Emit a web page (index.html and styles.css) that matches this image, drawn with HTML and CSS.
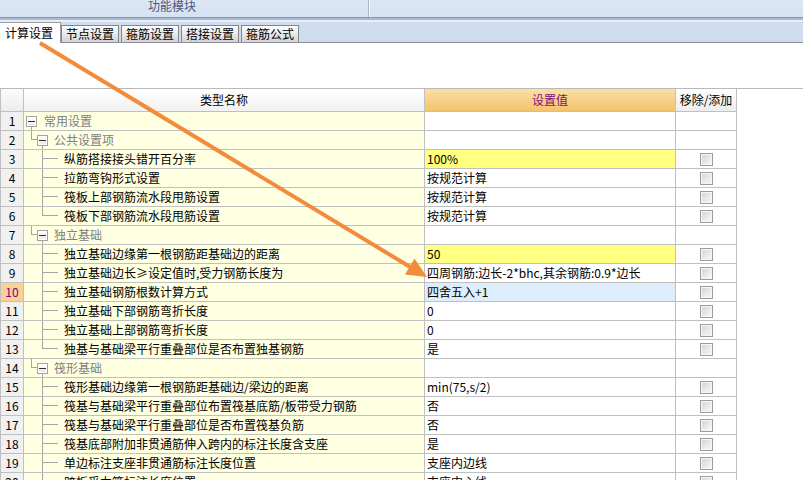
FILE: index.html
```html
<!DOCTYPE html>
<html lang="zh-CN">
<head>
<meta charset="utf-8">
<title>计算设置</title>
<link rel="stylesheet" href="styles.css">
</head>
<body>
<div class="topbar">
  <div class="tb-title">功能模块</div>
  <div class="tb-rest"></div>
</div>
<div class="tabstrip">
  <div class="tab active">计算设置</div>
  <div class="tab first">节点设置</div>
  <div class="tab">箍筋设置</div>
  <div class="tab">搭接设置</div>
  <div class="tab">箍筋公式</div>
</div>
<div class="gap"></div>
<div class="sheet">
  <div class="tbl">
    <div class="c h n"></div>
    <div class="c h nm">类型名称</div>
    <div class="c h v">设置值</div>
    <div class="c h k">移除/添加</div>

    <div class="c n">1</div>
    <div class="c nm g1"><span class="tog"></span><span class="gt">常用设置</span></div>
    <div class="c v"></div>
    <div class="c k"></div>

    <div class="c n">2</div>
    <div class="c nm g2"><span class="tog"></span><span class="gt">公共设置项</span></div>
    <div class="c v"></div>
    <div class="c k"></div>

    <div class="c n">3</div>
    <div class="c nm lf">纵筋搭接接头错开百分率</div>
    <div class="c v hl">100%</div>
    <div class="c k"><span class="cb"></span></div>

    <div class="c n">4</div>
    <div class="c nm lf">拉筋弯钩形式设置</div>
    <div class="c v">按规范计算</div>
    <div class="c k"><span class="cb"></span></div>

    <div class="c n">5</div>
    <div class="c nm lf">筏板上部钢筋流水段甩筋设置</div>
    <div class="c v">按规范计算</div>
    <div class="c k"><span class="cb"></span></div>

    <div class="c n">6</div>
    <div class="c nm lf last">筏板下部钢筋流水段甩筋设置</div>
    <div class="c v">按规范计算</div>
    <div class="c k"><span class="cb"></span></div>

    <div class="c n">7</div>
    <div class="c nm g2"><span class="tog"></span><span class="gt">独立基础</span></div>
    <div class="c v"></div>
    <div class="c k"></div>

    <div class="c n">8</div>
    <div class="c nm lf">独立基础边缘第一根钢筋距基础边的距离</div>
    <div class="c v hl">50</div>
    <div class="c k"><span class="cb"></span></div>

    <div class="c n">9</div>
    <div class="c nm lf">独立基础边长≥设定值时,受力钢筋长度为</div>
    <div class="c v">四周钢筋:边长-2*bhc,其余钢筋:0.9*边长</div>
    <div class="c k"><span class="cb"></span></div>

    <div class="c n sel">10</div>
    <div class="c nm lf">独立基础钢筋根数计算方式</div>
    <div class="c v sel">四舍五入+1</div>
    <div class="c k"><span class="cb"></span></div>

    <div class="c n">11</div>
    <div class="c nm lf">独立基础下部钢筋弯折长度</div>
    <div class="c v">0</div>
    <div class="c k"><span class="cb"></span></div>

    <div class="c n">12</div>
    <div class="c nm lf">独立基础上部钢筋弯折长度</div>
    <div class="c v">0</div>
    <div class="c k"><span class="cb"></span></div>

    <div class="c n">13</div>
    <div class="c nm lf last">独基与基础梁平行重叠部位是否布置独基钢筋</div>
    <div class="c v">是</div>
    <div class="c k"><span class="cb"></span></div>

    <div class="c n">14</div>
    <div class="c nm g2 end"><span class="tog"></span><span class="gt">筏形基础</span></div>
    <div class="c v"></div>
    <div class="c k"></div>

    <div class="c n">15</div>
    <div class="c nm lf">筏形基础边缘第一根钢筋距基础边/梁边的距离</div>
    <div class="c v">min(75,s/2)</div>
    <div class="c k"><span class="cb"></span></div>

    <div class="c n">16</div>
    <div class="c nm lf">筏基与基础梁平行重叠部位布置筏基底筋/板带受力钢筋</div>
    <div class="c v">否</div>
    <div class="c k"><span class="cb"></span></div>

    <div class="c n">17</div>
    <div class="c nm lf">筏基与基础梁平行重叠部位是否布置筏基负筋</div>
    <div class="c v">否</div>
    <div class="c k"><span class="cb"></span></div>

    <div class="c n">18</div>
    <div class="c nm lf">筏基底部附加非贯通筋伸入跨内的标注长度含支座</div>
    <div class="c v">是</div>
    <div class="c k"><span class="cb"></span></div>

    <div class="c n">19</div>
    <div class="c nm lf">单边标注支座非贯通筋标注长度位置</div>
    <div class="c v">支座内边线</div>
    <div class="c k"><span class="cb"></span></div>

    <div class="c n">20</div>
    <div class="c nm lf">跨板受力筋标注长度位置</div>
    <div class="c v">支座中心线</div>
    <div class="c k"><span class="cb"></span></div>
  </div>
</div>
<svg class="arrow" width="803" height="480" viewBox="0 0 803 480" aria-hidden="true">
  <line x1="40" y1="43" x2="411" y2="267.5" stroke="#f28b3b" stroke-width="4" stroke-linecap="butt"/>
  <polygon points="427,277 405,274.5 414.5,258.5" fill="#f28b3b"/>
</svg>
</body>
</html>
```

FILE: styles.css
```css
html, body {
  margin: 0;
  padding: 0;
}
body {
  font-family: "Noto Sans CJK SC", "Liberation Sans", sans-serif;
  font-size: 12px;
  color: #000;
  background: #fff;
  width: 803px;
  height: 480px;
  overflow: hidden;
  position: relative;
}

/* ---------- top bar ---------- */
.topbar {
  display: flex;
  height: 17px;
  border-bottom: 1px solid #8798b0;
  background: linear-gradient(#dde7f4, #d6e2f1);
  overflow: hidden;
}
.tb-title {
  width: 369px;
  box-sizing: border-box;
  padding-left: 148px;
  border-right: 1px solid #a8b6c9;
  line-height: 11px;
  color: #45587f;
}
.tb-rest {
  flex: 1;
  border-left: 1px solid #f4f7fc;
}

/* ---------- tabs ---------- */
.tabstrip {
  height: 24px;
  border-bottom: 1px solid #8f8e9a;
  background: linear-gradient(#a9bad2 0 2px, #e7eef8 2px 4px, #cfdcee 4px);
  display: flex;
  align-items: flex-end;
}
.tab {
  height: 17px;
  box-sizing: border-box;
  border: 1px solid #878787;
  border-bottom: none;
  padding: 0 4px;
  margin-left: 2px;
  line-height: 15px;
  background: linear-gradient(#ffffff, #d3d3d3);
  white-space: nowrap;
}
.tab.active {
  height: 21px;
  margin-left: 0;
  margin-bottom: -1px;
  border-left: none;
  border-color: #9d9d9d;
  padding: 0 7px 0 5px;
  line-height: 19px;
  background: #fff;
}
.tab.first {
  margin-left: 0;
}

.gap {
  height: 45px;
}

/* ---------- grid ---------- */
.sheet {
  border-top: 1px solid #b9b9b9;
}
.tbl {
  display: grid;
  grid-template-columns: 23px 401px 251px 61px;
  width: 737px;
  box-sizing: border-box;
  border-left: 1px solid #c0c0c0;
}
.c {
  height: 19px;
  box-sizing: border-box;
  border-right: 1px solid #c0c0c0;
  border-bottom: 1px solid #c0c0c0;
  line-height: 18px;
  white-space: nowrap;
  overflow: hidden;
}
.h {
  height: 23px;
  line-height: 22px;
  text-align: center;
}
.n {
  background: #f1f1f1;
  text-align: center;
}
.h.n {
  background: linear-gradient(#fbfbfb, #ededed);
}
.h.nm {
  background: linear-gradient(#ffffff, #f1f1f1);
}
.h.v {
  background: linear-gradient(#fbdfa4, #f2c36b);
  color: #7e0c7e;
}
.h.k {
  background: linear-gradient(#ffffff, #ededed);
}
.n.sel {
  background: #fbd193;
  color: #800080;
}

.nm {
  background-color: #ffffe1;
  display: flex;
  align-items: center;
}
.v {
  background: #fff;
  padding-left: 2px;
}
.v.hl {
  background: #ffff80;
}
.v.sel {
  background: #ddedfc;
}
.h.v, .h.nm, .h.k {
  padding-left: 0;
  display: block;
}
.k {
  display: flex;
  align-items: center;
  justify-content: center;
}
.cb {
  width: 13px;
  height: 13px;
  box-sizing: border-box;
  border: 1px solid #9c9c9c;
  background: linear-gradient(135deg, #d3d3d3, #fafafa);
  box-shadow: inset 0 0 0 1px #f6f6f6;
}

/* ---------- tree ---------- */
.tog {
  width: 11px;
  height: 11px;
  box-sizing: border-box;
  border: 1px solid #a3a3a3;
  background: linear-gradient(#2e2e2e, #2e2e2e) center / 7px 1px no-repeat, linear-gradient(#ffffff, #e9e9e9);
  box-shadow: inset 0 0 0 1px #ffffff;
  flex: none;
}
.gt {
  color: #808080;
}
.g1 {
  padding-left: 2px;
  background:
    linear-gradient(#a5a5a5, #a5a5a5) 7px 14px / 1px 100% no-repeat;
}
.g1 .gt {
  margin-left: 7px;
}
.g2 {
  padding-left: 13px;
  background:
    linear-gradient(#a5a5a5, #a5a5a5) 7px 0 / 1px 9px no-repeat,
    linear-gradient(#a5a5a5, #a5a5a5) 7px 8px / 6px 1px no-repeat,
    linear-gradient(#a5a5a5, #a5a5a5) 18px 14px / 1px 100% no-repeat;
}
.g2 .gt {
  margin-left: 6px;
}
.lf {
  padding-left: 40px;
  background:
    linear-gradient(#a5a5a5, #a5a5a5) 18px 0 / 1px 100% no-repeat,
    linear-gradient(#a5a5a5, #a5a5a5) 18px 8px / 16px 1px no-repeat;
}
.lf.last {
  background:
    linear-gradient(#a5a5a5, #a5a5a5) 18px 0 / 1px 9px no-repeat,
    linear-gradient(#a5a5a5, #a5a5a5) 18px 8px / 16px 1px no-repeat;
}
.nm.g1, .nm.g2, .nm.lf {
  background-color: #ffffe1;
}

/* ---------- annotation arrow ---------- */
.arrow {
  position: absolute;
  left: 0;
  top: 0;
  pointer-events: none;
}
```
